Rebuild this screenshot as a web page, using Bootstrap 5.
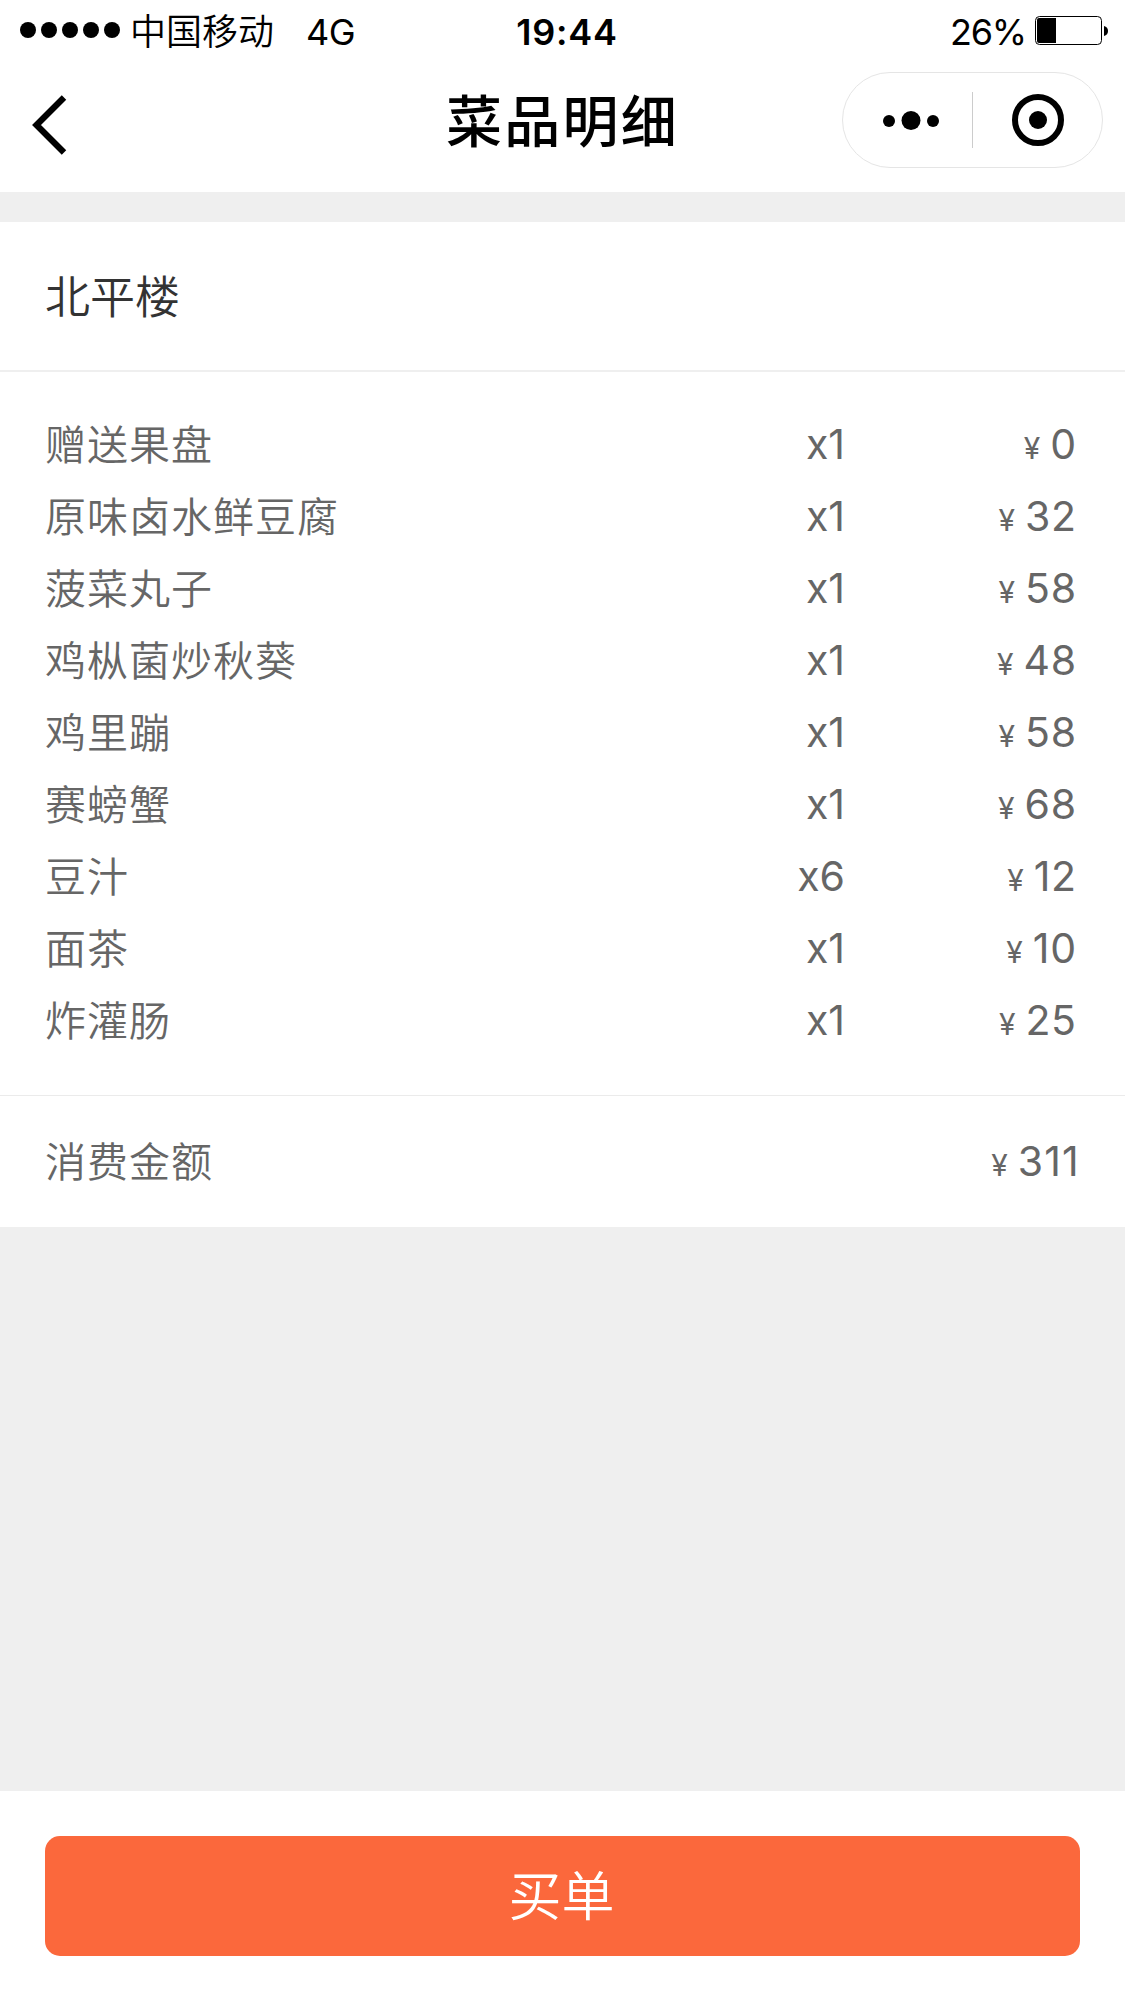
<!DOCTYPE html>
<html lang="zh-CN">
<head>
<meta charset="utf-8">
<meta name="viewport" content="width=device-width, initial-scale=1">
<title>菜品明细</title>
<link href="https://cdn.jsdelivr.net/npm/bootstrap@5.3.0/dist/css/bootstrap.min.css" rel="stylesheet">
<style>
body{font-family:Inter,"Noto Sans CJK SC",sans-serif;background:#efefef;color:#666;line-height:1}
.screen{height:2001px}
.status-bar{height:60px;padding:0 17px 0 20px;font-size:36px;color:#000}
.status-side{flex:1 1 0}
.signal{width:100px;height:16px;margin-right:10px}
.carrier{font-weight:350;margin-right:32px;padding-top:4px}
.net-type,.percent{font-weight:380;padding-top:3px}
.net-type{letter-spacing:-.5px}
.clock{font-weight:600;letter-spacing:.8px;margin-left:6px;padding-top:3px}
.percent{letter-spacing:-1.2px;margin-right:9px}
.nav-row{height:120px;margin-bottom:12px;padding:0 22px 0 30px;color:#000}
.nav-title{font-size:56px;font-weight:500;letter-spacing:2.2px;margin:0 8px 0 0;padding-top:5px}
.back-icon{width:38px;height:62px;margin:10px 0 0 0}
.capsule{width:261px;height:96px;border:1px solid #e5e5e5;border-radius:48px}
.shop-card{margin-top:30px}
.shop-name{height:150px;padding:3px 45px 0;font-size:45px;font-weight:350;color:#333;border-bottom:2px solid #efefef}
.dish-list{padding:36px 48px 39px 45px;border-bottom:1px solid #ebebeb}
.dish-row{height:72px;font-size:41px}
.dish-name{font-weight:350;letter-spacing:1px;padding-top:2px}
.dish-qty{margin-right:1px}
.dish-price{width:231px}
.amount{letter-spacing:.6px;margin-right:.4px}
.total-row .amount{letter-spacing:1.2px;margin-right:0}
.yen{display:inline-block;font-size:30px;font-weight:400;margin-right:10px}
.total-row{height:131px;padding:0 45px;font-size:41px}
.pay-bar{height:210px;padding:45px}
.btn-pay,.btn-pay:hover{height:120px;border:0;border-radius:15px;background:#fb683c;color:#fff;font-size:53px;font-weight:350;line-height:1;padding:9px 2px 6px 0}
</style>
</head>
<body>
<div class="screen d-flex flex-column">
  <header class="bg-white">
    <div class="status-bar d-flex align-items-center">
      <div class="status-side d-flex align-items-center">
        <svg class="signal" viewBox="0 0 100 16"><circle cx="8" cy="8" r="8"/><circle cx="29" cy="8" r="8"/><circle cx="50" cy="8" r="8"/><circle cx="71" cy="8" r="8"/><circle cx="92" cy="8" r="8"/></svg>
        <span class="carrier">中国移动</span><span class="net-type">4G</span>
      </div>
      <span class="clock">19:44</span>
      <div class="status-side d-flex align-items-center justify-content-end">
        <span class="percent">26%</span>
        <svg width="73" height="29" viewBox="0 0 73 29"><rect x=".5" y=".5" width="66" height="28" rx="4" fill="none" stroke="#000"/><path d="M4 2H21V27H4Q2 27 2 25V4Q2 2 4 2Z"/><path d="M69 10Q73 11 73 15Q73 19 69 20Z"/></svg>
      </div>
    </div>
    <nav class="nav-row row gx-0 align-items-center">
      <div class="col d-flex">
        <svg class="back-icon" viewBox="0 0 38 62" fill="none" stroke="#000" stroke-width="6.3"><path d="M34 3.500L6.500 31L34 58.500"/></svg>
      </div>
      <h1 class="nav-title col-auto">菜品明细</h1>
      <div class="col d-flex justify-content-end">
        <div class="capsule">
          <svg class="d-block" width="259" height="94" viewBox="843 73 259 94"><circle cx="889" cy="121" r="6"/><circle cx="911" cy="120.500" r="9.500"/><circle cx="933" cy="121" r="6"/><path d="M972.500 92V148" stroke="#ccc"/><circle cx="1038" cy="120" r="23" fill="none" stroke="#000" stroke-width="6"/><circle cx="1038" cy="120" r="9"/></svg>
        </div>
      </div>
    </nav>
  </header>
  <main class="shop-card bg-white">
    <div class="shop-name d-flex align-items-center">北平楼</div>
    <div class="dish-list">
      <div class="dish-row d-flex align-items-center"><span class="dish-name flex-grow-1">赠送果盘</span><span class="dish-qty">x1</span><span class="dish-price text-end"><span class="yen">¥</span><span class="amount">0</span></span></div>
      <div class="dish-row d-flex align-items-center"><span class="dish-name flex-grow-1">原味卤水鲜豆腐</span><span class="dish-qty">x1</span><span class="dish-price text-end"><span class="yen">¥</span><span class="amount">32</span></span></div>
      <div class="dish-row d-flex align-items-center"><span class="dish-name flex-grow-1">菠菜丸子</span><span class="dish-qty">x1</span><span class="dish-price text-end"><span class="yen">¥</span><span class="amount">58</span></span></div>
      <div class="dish-row d-flex align-items-center"><span class="dish-name flex-grow-1">鸡枞菌炒秋葵</span><span class="dish-qty">x1</span><span class="dish-price text-end"><span class="yen">¥</span><span class="amount">48</span></span></div>
      <div class="dish-row d-flex align-items-center"><span class="dish-name flex-grow-1">鸡里蹦</span><span class="dish-qty">x1</span><span class="dish-price text-end"><span class="yen">¥</span><span class="amount">58</span></span></div>
      <div class="dish-row d-flex align-items-center"><span class="dish-name flex-grow-1">赛螃蟹</span><span class="dish-qty">x1</span><span class="dish-price text-end"><span class="yen">¥</span><span class="amount">68</span></span></div>
      <div class="dish-row d-flex align-items-center"><span class="dish-name flex-grow-1">豆汁</span><span class="dish-qty">x6</span><span class="dish-price text-end"><span class="yen">¥</span><span class="amount">12</span></span></div>
      <div class="dish-row d-flex align-items-center"><span class="dish-name flex-grow-1">面茶</span><span class="dish-qty">x1</span><span class="dish-price text-end"><span class="yen">¥</span><span class="amount">10</span></span></div>
      <div class="dish-row d-flex align-items-center"><span class="dish-name flex-grow-1">炸灌肠</span><span class="dish-qty">x1</span><span class="dish-price text-end"><span class="yen">¥</span><span class="amount">25</span></span></div>
    </div>
    <div class="total-row d-flex align-items-center justify-content-between"><span class="dish-name">消费金额</span><span><span class="yen">¥</span><span class="amount">311</span></span></div>
  </main>
  <footer class="pay-bar bg-white mt-auto"><button type="button" class="btn btn-pay w-100">买单</button></footer>
</div>
<script src="https://cdn.jsdelivr.net/npm/bootstrap@5.3.0/dist/js/bootstrap.bundle.min.js"></script>
</body>
</html>
